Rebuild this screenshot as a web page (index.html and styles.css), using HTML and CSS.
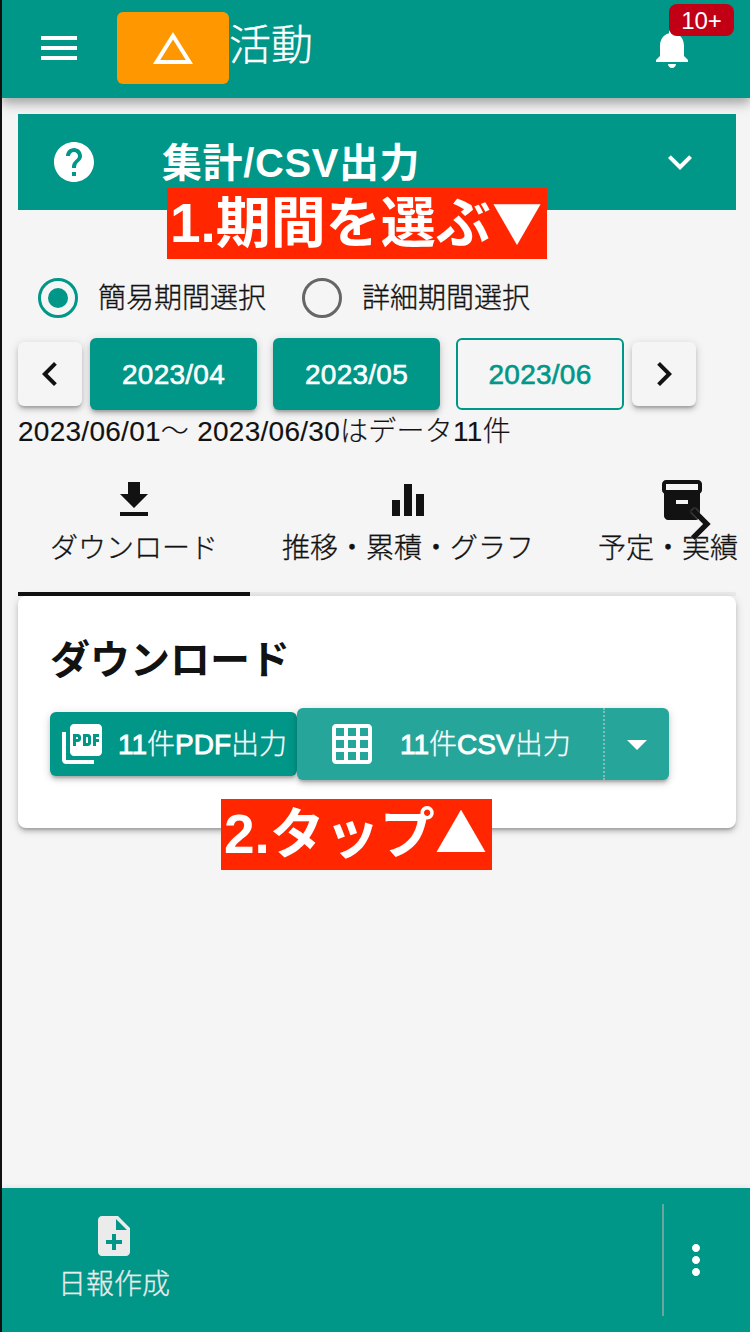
FILE: index.html
```html
<!DOCTYPE html>
<html lang="ja">
<head>
<meta charset="utf-8">
<title>活動</title>
<link rel="stylesheet" href="styles.css">
</head>
<body>
<div class="app">
  <header class="header">
    <svg class="icon menu-icon" viewBox="0 0 24 24"><path d="M3 18h18v-2H3v2zm0-5h18v-2H3v2zm0-7v2h18V6H3z"/></svg>
    <div class="logo"><svg class="icon" viewBox="0 0 24 24"><path d="M12 7.77L18.39 18H5.61L12 7.77M12 4L2 20h20L12 4z"/></svg></div>
    <span class="app-title">活動</span>
    <div class="bell">
      <svg class="icon" viewBox="0 0 24 24"><path d="M12 22c1.1 0 2-.9 2-2h-4c0 1.1.89 2 2 2zm6-6v-5c0-3.07-1.64-5.64-4.5-6.32V4c0-.83-.67-1.5-1.5-1.5s-1.5.67-1.5 1.5v.68C7.63 5.36 6 7.92 6 11v5l-2 2v1h16v-1l-2-2z"/></svg>
      <span class="badge">10+</span>
    </div>
  </header>

  <main class="main">
    <section class="section-bar">
      <svg class="icon" viewBox="0 0 24 24"><path d="M12 2C6.48 2 2 6.48 2 12s4.48 10 10 10 10-4.48 10-10S17.52 2 12 2zm1 17h-2v-2h2v2zm2.07-7.75l-.9.92C13.45 12.9 13 13.5 13 15h-2v-.5c0-1.1.45-2.1 1.17-2.83l1.24-1.26c.37-.36.59-.86.59-1.41 0-1.1-.9-2-2-2s-2 .9-2 2H8c0-2.21 1.79-4 4-4s4 1.79 4 4c0 .88-.36 1.68-.93 2.25z"/></svg>
      <h1 class="section-title">集計/CSV出力</h1>
      <svg class="icon" viewBox="0 0 24 24"><path d="M7.41 8.59L12 13.17l4.59-4.58L18 10l-6 6-6-6 1.41-1.41z"/></svg>
      <span class="callout callout-period">1.期間を選ぶ<span class="mark mark-down">▼</span></span>
    </section>

    <div class="radios">
      <div class="radio"><span class="dot dot-on"></span><span>簡易期間選択</span></div>
      <div class="radio"><span class="dot"></span><span>詳細期間選択</span></div>
    </div>

    <div class="months">
      <div class="step"><svg class="icon" viewBox="0 0 24 24"><path d="M15.41 7.41L14 6l-6 6 6 6 1.41-1.41L10.83 12z"/></svg></div>
      <div class="month month-first">2023/04</div>
      <div class="month">2023/05</div>
      <div class="month month-outline">2023/06</div>
      <div class="step"><svg class="icon" viewBox="0 0 24 24"><path d="M10 6L8.59 7.41 13.17 12l-4.58 4.59L10 18l6-6z"/></svg></div>
    </div>
    <p class="summary">2023/06/01〜 2023/06/30はデータ11件</p>

    <nav class="tabs">
      <div class="tab tab-active">
        <svg class="icon" viewBox="0 0 24 24"><path d="M19 9h-4V3H9v6H5l7 7 7-7zM5 18v2h14v-2H5z"/></svg>
        <span>ダウンロード</span>
      </div>
      <div class="tab">
        <svg class="icon" viewBox="0 0 24 24"><path d="M10 20h4V4h-4v16zm-6 0h4v-8H4v8zM16 9v11h4V9h-4z"/></svg>
        <span>推移・累積・グラフ</span>
      </div>
      <div class="tab tab-last">
        <svg class="icon" viewBox="0 0 24 24"><path d="M20 2H4c-1 0-2 .9-2 2v3.01c0 .72.43 1.34 1 1.69V20c0 1.1 1.1 2 2 2h14c.9 0 2-.9 2-2V8.7c.57-.35 1-.97 1-1.69V4c0-1.1-1-2-2-2zm-5 12H9v-2h6v2zm5-7H4V4l16-.02V7z"/></svg>
        <span>予定・実績</span>
      </div>
      <svg class="tabs-next" viewBox="0 0 24 24"><path d="M10 6L8.59 7.41 13.17 12l-4.58 4.59L10 18l6-6z"/></svg>
    </nav>

    <section class="card">
      <h2 class="card-title">ダウンロード</h2>
      <div class="actions">
        <div class="btn btn-pdf">
          <svg class="icon" viewBox="0 0 24 24"><path d="M20 2H8c-1.1 0-2 .9-2 2v12c0 1.1.9 2 2 2h12c1.1 0 2-.9 2-2V4c0-1.1-.9-2-2-2zm-8.5 7.5c0 .83-.67 1.5-1.5 1.5H9v2H7.5V7H10c.83 0 1.5.67 1.5 1.5v1zm5 2c0 .83-.67 1.5-1.5 1.5h-2.5V7H15c.83 0 1.5.67 1.5 1.5v3zm4-3H19v1h1.5V11H19v2h-1.5V7h3v1.5zM9 9.5h1v-1H9v1zM4 6H2v14c0 1.1.9 2 2 2h14v-2H4V6zm10 5.5h1v-3h-1v3z"/></svg>
          <span class="btn-label"><b>11</b>件<b>PDF</b>出力</span>
        </div>
        <div class="btn btn-csv">
          <div class="csv-main">
            <svg class="icon" viewBox="0 0 24 24"><path d="M20 2H4c-1.1 0-2 .9-2 2v16c0 1.1.9 2 2 2h16c1.1 0 2-.9 2-2V4c0-1.1-.9-2-2-2zM8 20H4v-4h4v4zm0-6H4v-4h4v4zm0-6H4V4h4v4zm6 12h-4v-4h4v4zm0-6h-4v-4h4v4zm0-6h-4V4h4v4zm6 12h-4v-4h4v4zm0-6h-4v-4h4v4zm0-6h-4V4h4v4z"/></svg>
            <span class="btn-label"><b>11</b>件<b>CSV</b>出力</span>
          </div>
          <div class="csv-more"><svg class="icon" viewBox="0 0 24 24"><path d="M7 10l5 5 5-5z"/></svg></div>
        </div>
      </div>
      <span class="callout callout-tap">2.タップ<span class="mark">▲</span></span>
    </section>
  </main>

  <footer class="footer">
    <div class="create">
      <svg class="icon" viewBox="0 0 24 24"><path d="M14 2H6c-1.1 0-1.99.9-1.99 2L4 20c0 1.1.89 2 1.99 2H18c1.1 0 2-.9 2-2V8l-6-6zm2 14h-3v3h-2v-3H8v-2h3v-3h2v3h3v2zm-3-7V3.5L18.5 9H13z"/></svg>
      <span>日報作成</span>
    </div>
    <div class="more"><svg class="icon" viewBox="0 0 24 24"><path d="M12 8c1.1 0 2-.9 2-2s-.9-2-2-2-2 .9-2 2 .9 2 2 2zm0 2c-1.1 0-2 .9-2 2s.9 2 2 2 2-.9 2-2-.9-2-2-2zm0 6c-1.1 0-2 .9-2 2s.9 2 2 2 2-.9 2-2-.9-2-2-2z"/></svg></div>
  </footer>
</div>
</body>
</html>
```

FILE: styles.css
```css
* { box-sizing: border-box; }

body {
  margin: 0;
  background: #f5f5f5;
  color: #121212;
  font-family: "Liberation Sans", "Noto Sans CJK JP", sans-serif;
  font-size: 28px;
  font-weight: 300;
  line-height: 42px;
}

h1, h2, p { margin: 0; }

.app {
  display: flex;
  flex-direction: column;
  width: 750px;
  height: 1332px;
  border-left: 2px solid #111;
  overflow: hidden;
}

.icon {
  display: block;
  flex: none;
  width: 48px;
  height: 48px;
  fill: currentColor;
}

.header {
  display: flex;
  align-items: center;
  flex: none;
  height: 98px;
  padding: 0 28px 2px 33px;
  background: #009688;
  color: #fff;
  box-shadow: 0 4px 8px rgba(0, 0, 0, .16), 0 8px 10px rgba(0, 0, 0, .12), 0 2px 20px rgba(0, 0, 0, .1);
}

.menu-icon { margin-right: 34px; }

.logo {
  display: flex;
  align-items: center;
  justify-content: center;
  width: 112px;
  height: 72px;
  border-radius: 6px;
  background: #ff9800;
}

.app-title {
  flex: 1;
  font-size: 42px;
  line-height: 60px;
  padding-bottom: 5px;
  -webkit-text-stroke: .4px currentColor;
}

.bell { position: relative; margin-right: 26px; }

.badge {
  position: absolute;
  left: 21px;
  top: -20px;
  width: 65px;
  height: 32px;
  border-radius: 8px;
  background: #c10015;
  font-size: 24px;
  line-height: 34px;
  text-align: center;
}

.main { flex: 1; padding: 16px 14px 0 16px; }

.section-bar {
  position: relative;
  display: flex;
  align-items: center;
  height: 96px;
  padding: 0 32px;
  background: #009688;
  color: #fff;
}

.section-title {
  flex: 1;
  margin-left: 64px;
  padding-top: 1px;
  font-size: 40px;
  font-weight: 700;
  line-height: 60px;
  letter-spacing: .6px;
}

.callout {
  position: absolute;
  height: 71px;
  background: #ff2600;
  color: #fff;
  font-size: 55px;
  font-weight: 700;
  line-height: 70px;
  white-space: nowrap;
  padding-left: 3px;
}

.callout-period { left: 149px; top: 74px; width: 380px; }
.callout-tap { left: 203px; top: 203px; width: 271px; }

.mark {
  font-family: "Noto Sans CJK JP", sans-serif;
  font-size: 52px;
  line-height: 1;
}

.mark-down { font-size: 50px; padding-left: 1px; }

.radios {
  display: flex;
  gap: 36px;
  height: 128px;
  padding: 68px 20px 0;
}

.radio {
  display: flex;
  align-items: center;
  gap: 20px;
  width: 228px;
  height: 40px;
  white-space: nowrap;
}

.radio span:last-child { padding-top: 2px; }

.radio span:last-child, .tab span, .create span {
  -webkit-text-stroke: .3px currentColor;
}

.dot {
  display: flex;
  align-items: center;
  justify-content: center;
  flex: none;
  width: 40px;
  height: 40px;
  border: 3px solid #666;
  border-radius: 50%;
}

.dot-on { border-color: #009688; }

.dot-on::after {
  content: "";
  width: 20px;
  height: 20px;
  border-radius: 50%;
  background: #009688;
}

.step, .month, .btn, .card {
  box-shadow: 0 2px 10px rgba(0, 0, 0, .16), 0 4px 4px rgba(0, 0, 0, .12), 0 3px 2px -1px rgba(0, 0, 0, .14);
}

.months { display: flex; align-items: center; gap: 8px; height: 72px; }

.step {
  display: flex;
  align-items: center;
  justify-content: center;
  width: 64px;
  height: 64px;
  border-radius: 6px;
  background: #f5f5f5;
}

.month {
  width: 167px;
  height: 72px;
  margin-left: 8px;
  border-radius: 6px;
  background: #009688;
  color: #fff;
  line-height: 74px;
  text-align: center;
  letter-spacing: .25px;
  -webkit-text-stroke: .6px currentColor;
}

.month-first { margin-left: 0; }

.month-outline {
  width: 168px;
  border: 2px solid #009688;
  background: none;
  box-shadow: none;
  color: #009688;
  line-height: 70px;
}

.summary {
  height: 42px;
  line-height: 44px;
  letter-spacing: .27px;
  white-space: nowrap;
  -webkit-text-stroke: .15px currentColor;
}

.tabs {
  position: relative;
  display: flex;
  height: 144px;
  margin-right: -14px;
  overflow: hidden;
}

.tab {
  display: flex;
  flex: none;
  flex-direction: column;
  align-items: center;
  padding: 24px 32px 0;
  border-bottom: 4px solid #ebebeb;
}

.tab span { white-space: nowrap; margin-top: 4px; }
.tab-active { border-bottom-color: #121212; }
.tab-last { width: 170px; padding-right: 0; align-items: flex-start; }
.tab-last .icon { margin-left: 60px; }

.tabs-next {
  position: absolute;
  left: 650px;
  top: 40px;
  width: 64px;
  height: 64px;
  fill: #121212;
  filter: drop-shadow(0 0 1px rgba(245, 245, 245, .6));
}

.card {
  position: relative;
  height: 232px;
  padding: 32px;
  border-radius: 8px;
  background: #fff;
}

.card-title {
  height: 80px;
  font-size: 40px;
  font-weight: 700;
  line-height: 64px;
}

.actions { display: flex; align-items: center; height: 72px; color: #fff; }

.btn { display: flex; align-items: center; border-radius: 6px; }
.btn-pdf { width: 247px; height: 64px; padding-left: 8px; gap: 12px; background: #009688; }
.btn-csv { width: 372px; height: 72px; background: #26a69a; }

.csv-main { display: flex; align-items: center; gap: 24px; width: 306px; padding-left: 31px; }

.csv-more {
  display: flex;
  align-items: center;
  justify-content: center;
  width: 66px;
  height: 72px;
  border-left: 2px dotted #7fbdb6;
}

.btn-label { white-space: nowrap; padding-top: 1px; -webkit-text-stroke: .3px currentColor; }
.btn-label b { font-weight: 400; -webkit-text-stroke: .9px currentColor; }

.footer {
  display: flex;
  justify-content: space-between;
  flex: none;
  height: 144px;
  padding: 16px 30px 16px 56px;
  background: #009688;
  box-shadow: 0 -2px 4px rgba(0, 0, 0, .06);
}

.create {
  display: flex;
  flex-direction: column;
  align-items: center;
  gap: 4px;
  padding-top: 8px;
  color: #ebebeb;
}

.more {
  display: flex;
  align-items: center;
  padding-left: 8px;
  border-left: 2px solid #6ba59f;
  color: #fff;
}
```
